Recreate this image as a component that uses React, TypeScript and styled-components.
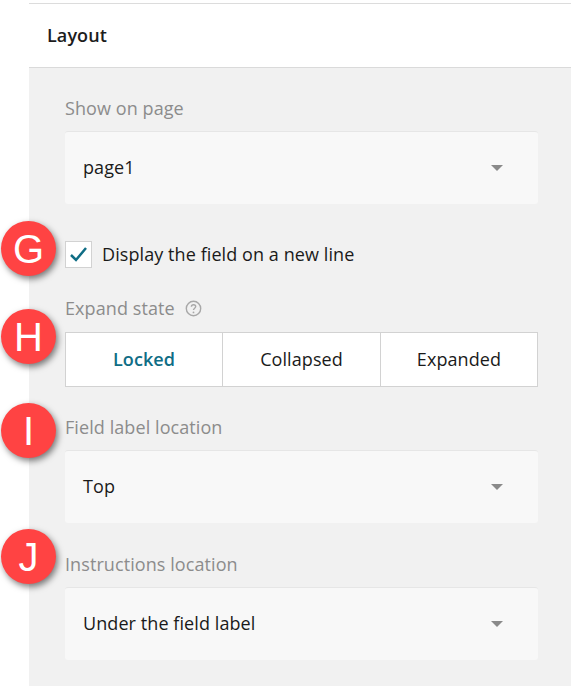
import React from 'react';
import styled, { createGlobalStyle } from 'styled-components';

const GlobalStyle = createGlobalStyle`
  html, body {
    margin: 0;
    padding: 0;
    background: #fff;
    overflow: hidden;
  }
  body {
    font-family: 'Open Sans', 'Liberation Sans', sans-serif;
    letter-spacing: 0.08px;
    color: #1a1a1a;
  }
`;

const Page = styled.div`
  width: 571px;
  height: 686px;
  padding: 3px 0 0 29px;
  box-sizing: border-box;
  overflow: hidden;
  position: relative;
`;

const Panel = styled.section`
  border-top: 1px solid #dcdcdc;
  background: #f1f1f1;
  height: 683px;
  box-sizing: border-box;
`;

const Header = styled.header`
  height: 64px;
  box-sizing: border-box;
  padding: 0 18px 1px;
  display: flex;
  align-items: center;
  background: #fff;
  border-bottom: 1px solid #dadada;
  font-size: 18px;
  font-weight: 600;
  color: #1c1c1c;
`;

const Body = styled.div`
  padding: 28px 33px 0 36px;
  display: flex;
  flex-direction: column;
`;

const Label = styled.div<{ $gap?: number }>`
  margin-top: ${(p) => p.$gap ?? 0}px;
  height: 24px;
  line-height: 24px;
  font-size: 18px;
  color: #8c8c8c;
  display: flex;
  align-items: center;
  gap: 10px;
`;

const Select = styled.div`
  margin-top: 11px;
  height: 73px;
  box-sizing: border-box;
  padding: 0 35px 3px 18px;
  display: flex;
  align-items: center;
  justify-content: space-between;
  background: #f8f8f8;
  border-top: 1px solid #e6e6e6;
  border-radius: 3px;
  font-size: 18px;
  color: #1a1a1a;
`;

const Caret = styled.span`
  margin-top: 3px;
  width: 0;
  height: 0;
  border-left: 6px solid transparent;
  border-right: 6px solid transparent;
  border-top: 6px solid #8a8a8a;
`;

const CheckRow = styled.label`
  margin-top: 37px;
  display: flex;
  align-items: center;
  gap: 10px;
  font-size: 18px;
  height: 27px;
  color: #1a1a1a;
`;

const CheckBox = styled.span`
  width: 27px;
  height: 27px;
  box-sizing: border-box;
  display: flex;
  align-items: center;
  justify-content: center;
  background: #fff;
  border: 1px solid #d2d2d2;
`;

const CheckText = styled.span`
  margin-bottom: 2px;
`;

const Segments = styled.div`
  margin-top: 12px;
  height: 55px;
  box-sizing: border-box;
  display: grid;
  grid-template-columns: 156px 158px 1fr;
  background: #fff;
  border: 1px solid #d2d2d2;
`;

const Segment = styled.div<{ $active?: boolean }>`
  display: flex;
  align-items: center;
  justify-content: center;
  padding-bottom: 1px;
  font-size: 18px;
  font-weight: ${(p) => (p.$active ? 600 : 400)};
  color: ${(p) => (p.$active ? '#0f6d85' : '#1a1a1a')};
  & + & {
    border-left: 1px solid #d2d2d2;
  }
`;

const Badge = styled.div<{ $top: number }>`
  position: absolute;
  left: 1px;
  top: ${(p) => p.$top}px;
  width: 55px;
  height: 55px;
  border-radius: 50%;
  background: #ff4343;
  color: #fff;
  font-family: 'Liberation Sans', Arial, sans-serif;
  font-size: 40px;
  line-height: 57px;
  text-align: center;
  box-shadow: 2px 3px 6px rgba(0, 0, 0, 0.5);
`;

const App: React.FC = () => (
  <Page>
    <GlobalStyle />
    <Panel>
      <Header>Layout</Header>
      <Body>
        <Label>Show on page</Label>
        <Select>
          page1
          <Caret />
        </Select>
        <CheckRow>
          <CheckBox>
            <svg width="19" height="17" viewBox="0 0 19 17" fill="none">
              <path d="M2 9l5 5L17 2" stroke="#0f6d85" strokeWidth="2.5" />
            </svg>
          </CheckBox>
          <CheckText>Display the field on a new line</CheckText>
        </CheckRow>
        <Label $gap={28}>
          Expand state
          <svg width="17" height="17" viewBox="0 0 17 17" fill="none">
            <circle cx="8.5" cy="8.5" r="7.2" stroke="#a8a8a8" strokeWidth="1.4" />
            <path
              d="M6.4 6.7c0-1.2 1-2 2.2-2s2.1.8 2.1 1.9c0 1.6-2.2 1.6-2.2 3.4"
              stroke="#a8a8a8"
              strokeWidth="1.4"
            />
            <circle cx="8.5" cy="12.4" r="0.9" fill="#a8a8a8" />
          </svg>
        </Label>
        <Segments>
          <Segment $active>Locked</Segment>
          <Segment>Collapsed</Segment>
          <Segment>Expanded</Segment>
        </Segments>
        <Label $gap={28}>Field label location</Label>
        <Select>
          Top
          <Caret />
        </Select>
        <Label $gap={29}>Instructions location</Label>
        <Select>
          Under the field label
          <Caret />
        </Select>
      </Body>
    </Panel>
    <Badge $top={221}>G</Badge>
    <Badge $top={309}>H</Badge>
    <Badge $top={403}>I</Badge>
    <Badge $top={529}>J</Badge>
  </Page>
);

export default App;
